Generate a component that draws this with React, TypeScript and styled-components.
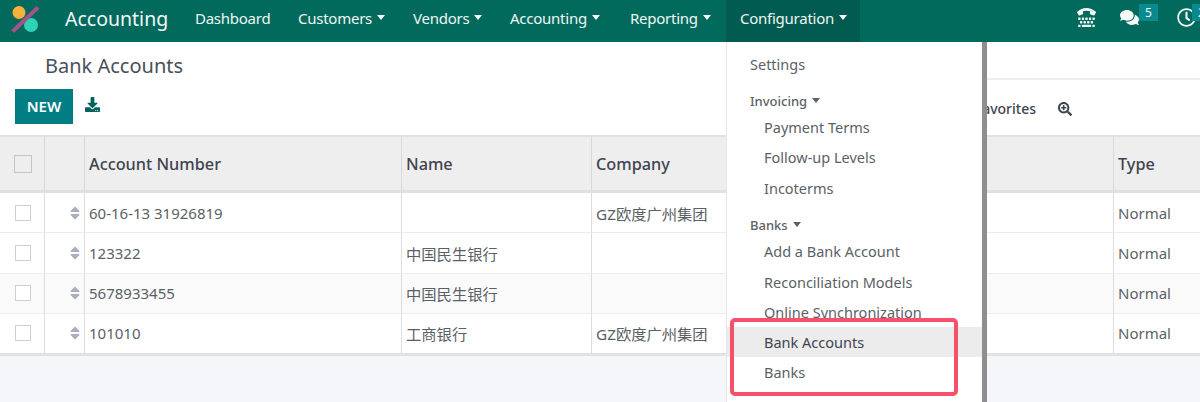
import React from "react";
import styled, { createGlobalStyle } from "styled-components";
import { FaComments, FaDownload, FaRegClock, FaSearchPlus, FaSort, FaTty } from "react-icons/fa";

const FONT = `"Noto Sans", "Noto Sans CJK SC", sans-serif`;

const Global = createGlobalStyle`
  html, body { margin: 0; padding: 0; }
  body { font-family: ${FONT}; background: #f5f6f9; color: #4c4c4c; }
`;

const Page = styled.div`
  position: relative;
  width: 1200px;
  height: 402px;
  overflow: hidden;
  background: #f5f6f9;
`;

const NavBar = styled.header`
  display: flex;
  align-items: center;
  height: 42px;
  background: #016a5c;
  color: #fff;
`;

const Logo = styled.svg`
  width: 30px;
  height: 30px;
  margin: 0 25px 0 10px;
  flex: none;
`;

const AppName = styled.div`
  font-size: 19.5px;
  width: 116px;
  padding-bottom: 6px;
  color: #f2f8f6;
`;

const NavItem = styled.div<{ $active?: boolean; $w: number }>`
  display: flex;
  align-items: center;
  gap: 5px;
  height: 42px;
  width: ${(p) => p.$w}px;
  padding: 0 0 6px 14px;
  box-sizing: border-box;
  font-size: 15px;
  letter-spacing: -0.25px;
  color: #eef6f4;
  background: ${(p) => (p.$active ? "#015b50" : "transparent")};
`;

const Caret = styled.span<{ $color?: string }>`
  display: inline-block;
  width: 0;
  height: 0;
  border-left: 4.5px solid transparent;
  border-right: 4.5px solid transparent;
  border-top: 5px solid ${(p) => p.$color || "#fff"};
  margin-bottom: 1px;
`;

const Systray = styled.div`
  display: flex;
  align-items: center;
  margin-left: auto;
  height: 42px;
  flex: none;
`;

const TrayIcon = styled.div<{ $w: number }>`
  position: relative;
  display: flex;
  align-items: center;
  width: ${(p) => p.$w}px;
  height: 42px;
  padding-bottom: 7px;
  box-sizing: border-box;
  color: #f4f8f7;
  font-size: 19px;
`;

const Badge = styled.span<{ $left: number }>`
  position: absolute;
  left: ${(p) => p.$left}px;
  top: 4px;
  width: 19px;
  height: 17px;
  display: flex;
  align-items: center;
  justify-content: center;
  background: #0a8a8f;
  color: #f0f9f9;
  font-size: 12px;
`;

const ControlPanel = styled.section`
  display: grid;
  grid-template-columns: 726px 1fr;
  height: 93px;
  background: #fff;
  box-sizing: border-box;
`;

const CpLeft = styled.div`
  display: flex;
  flex-direction: column;
`;

const Title = styled.h1`
  margin: 10px 0 0 45px;
  font-size: 20px;
  line-height: 28px;
  font-weight: 400;
  color: #4a4f59;
`;

const Actions = styled.div`
  display: flex;
  align-items: flex-start;
  gap: 12px;
  margin: 9px 0 0 15px;
`;

const NewButton = styled.button`
  width: 58px;
  height: 35px;
  border: 0;
  padding: 0 0 2px;
  background: #017e84;
  color: #fff;
  font-family: ${FONT};
  font-size: 15px;
  font-weight: 600;
`;

const Download = styled.span`
  color: #01645c;
  font-size: 15px;
  line-height: 1;
  margin-top: 8px;
`;

const CpRight = styled.div`
  display: flex;
  align-items: center;
  justify-content: flex-end;
  gap: 22px;
  margin-top: 36px;
  padding: 2px 128px 0 0;
  border-top: 2px solid #eeeeee;
  font-size: 14px;
  color: #3f4450;
  font-weight: 500;
`;

const Table = styled.table`
  width: 1200px;
  table-layout: fixed;
  border-collapse: separate;
  border-spacing: 0;
  background: #fff;
  font-size: 15px;
  color: #5b5f66;
  border-bottom: 2px solid #e2e2e2;
`;

const HeadCell = styled.th`
  height: 53px;
  padding: 0 4px;
  background: #eeeeee;
  text-align: left;
  font-size: 16.3px;
  font-weight: 500;
  color: #3f444e;
  border-top: 2px solid #e2e2e2;
  border-bottom: 3px solid #e0e0e0;
  border-left: 1px solid #d8d8dc;
  &:first-child { border-left: 0; }
`;

const Row = styled.tr<{ $tint?: boolean }>`
  background: ${(p) => (p.$tint ? "#fafafa" : "#fff")};
`;

const Cell = styled.td<{ $cjk?: boolean }>`
  height: 39.25px;
  padding: 0 4px;
  border-bottom: 1px solid #ececec;
  border-left: 1px solid #dcdcdf;
  white-space: nowrap;
  font-size: ${(p) => (p.$cjk ? "15.3px" : "15px")};
  &:first-child { border-left: 0; }
  tr:last-child & { border-bottom-color: #e2e2e2; }
`;

const CheckWrap = styled.div`
  display: flex;
  justify-content: center;
  padding-left: 2px;
`;

const Check = styled.span<{ $size: number }>`
  display: block;
  width: ${(p) => p.$size}px;
  height: ${(p) => p.$size}px;
  box-sizing: border-box;
  background: #fff;
  border: 1px solid #cfcfcf;
`;

const HeadCheck = styled(Check)`
  background: #eeeeee;
  border-color: #c4c4c4;
`;

const Handle = styled.div`
  display: flex;
  justify-content: flex-end;
  margin-right: -3px;
  color: #a9b0bb;
  font-size: 16px;
`;

const Menu = styled.nav`
  position: absolute;
  left: 726px;
  top: 42px;
  width: 255px;
  height: 360px;
  background: #fff;
  border-right: 5px solid #8e8e8e;
  border-left: 1px solid #e6e6e6;
  box-sizing: content-box;
`;

const MenuItem = styled.div<{ $top: number; $indent?: boolean; $active?: boolean }>`
  position: absolute;
  left: 0;
  right: 0;
  top: ${(p) => p.$top}px;
  height: 30px;
  display: flex;
  align-items: center;
  padding-left: ${(p) => (p.$indent ? 37 : 23)}px;
  font-size: 14.5px;
  color: ${(p) => (p.$active ? "#3f4450" : "#5b5f66")};
  background: ${(p) => (p.$active ? "#ececec" : "transparent")};
`;

const MenuHeader = styled(MenuItem)`
  font-size: 13px;
  font-weight: 500;
  gap: 5px;
`;

const Highlight = styled.div`
  position: absolute;
  left: 730px;
  top: 318px;
  width: 228px;
  height: 78px;
  box-sizing: border-box;
  border: 4px solid #f7506a;
  border-radius: 5px;
`;

const navItems: [string, number, boolean][] = [
  ["Dashboard", 103, false],
  ["Customers", 115, true],
  ["Vendors", 97, true],
  ["Accounting", 120, true],
  ["Reporting", 110, true],
];

const rows: [string, string, string][] = [
  ["60-16-13 31926819", "", "GZ欧度广州集团"],
  ["123322", "中国民生银行", ""],
  ["5678933455", "中国民生银行", ""],
  ["101010", "工商银行", "GZ欧度广州集团"],
];

export default function App() {
  return (
    <Page>
      <Global />
      <NavBar>
        <Logo viewBox="0 0 30 30">
          <circle cx="9" cy="6.5" r="6.5" fill="#fbb13c" />
          <circle cx="21" cy="19" r="7" fill="#2ed3b7" />
          <path d="M2.5 25.5 L28 1.5" stroke="#a5518a" strokeWidth="4" />
        </Logo>
        <AppName>Accounting</AppName>
        {navItems.map(([label, w, caret]) => (
          <NavItem key={label} $w={w}>
            {label}
            {caret && <Caret />}
          </NavItem>
        ))}
        <NavItem $active $w={134}>
          Configuration
          <Caret />
        </NavItem>
        <Systray>
          <TrayIcon $w={43}><FaTty /></TrayIcon>
          <TrayIcon $w={57}>
            <FaComments />
            <Badge $left={19}>5</Badge>
          </TrayIcon>
          <TrayIcon $w={23}>
            <FaRegClock />
            <Badge $left={15}>2</Badge>
          </TrayIcon>
        </Systray>
      </NavBar>
      <ControlPanel>
        <CpLeft>
          <Title>Bank Accounts</Title>
          <Actions>
            <NewButton>NEW</NewButton>
            <Download><FaDownload /></Download>
          </Actions>
        </CpLeft>
        <CpRight>
          <span>Favorites</span>
          <FaSearchPlus />
        </CpRight>
      </ControlPanel>
      <Table>
        <colgroup>
          <col style={{ width: 44 }} />
          <col style={{ width: 40 }} />
          <col style={{ width: 317 }} />
          <col style={{ width: 190 }} />
          <col style={{ width: 522 }} />
          <col style={{ width: 87 }} />
        </colgroup>
        <thead>
          <tr>
            <HeadCell><CheckWrap><HeadCheck $size={18} /></CheckWrap></HeadCell>
            <HeadCell />
            <HeadCell>Account Number</HeadCell>
            <HeadCell>Name</HeadCell>
            <HeadCell>Company</HeadCell>
            <HeadCell>Type</HeadCell>
          </tr>
        </thead>
        <tbody>
          {rows.map(([num, name, company], i) => (
            <Row key={num} $tint={i === 2}>
              <Cell><CheckWrap><Check $size={16} /></CheckWrap></Cell>
              <Cell><Handle><FaSort /></Handle></Cell>
              <Cell>{num}</Cell>
              <Cell $cjk>{name}</Cell>
              <Cell $cjk>{company}</Cell>
              <Cell>Normal</Cell>
            </Row>
          ))}
        </tbody>
      </Table>
      <Menu>
        <MenuItem $top={7}>Settings</MenuItem>
        <MenuHeader $top={44}>Invoicing <Caret $color="#5b5f66" /></MenuHeader>
        <MenuItem $indent $top={70}>Payment Terms</MenuItem>
        <MenuItem $indent $top={100}>Follow-up Levels</MenuItem>
        <MenuItem $indent $top={131}>Incoterms</MenuItem>
        <MenuHeader $top={168}>Banks <Caret $color="#5b5f66" /></MenuHeader>
        <MenuItem $indent $top={194}>Add a Bank Account</MenuItem>
        <MenuItem $indent $top={225}>Reconciliation Models</MenuItem>
        <MenuItem $indent $top={255}>Online Synchronization</MenuItem>
        <MenuItem $indent $active $top={285}>Bank Accounts</MenuItem>
        <MenuItem $indent $top={315}>Banks</MenuItem>
      </Menu>
      <Highlight />
    </Page>
  );
}
